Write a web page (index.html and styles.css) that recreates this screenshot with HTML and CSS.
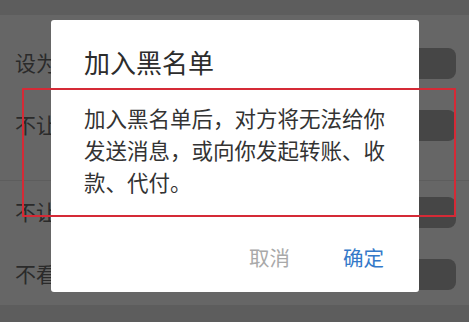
FILE: index.html
```html
<!DOCTYPE html>
<html lang="zh-CN">
<head>
    <meta charset="UTF-8">
    <meta name="viewport" content="width=device-width, initial-scale=1.0">
    <title>加入黑名单</title>
    <link rel="stylesheet" href="styles.css">
</head>
<body>
    <main class="settings">
        <section class="group group-first">
            <div class="row">
                <span class="label">设为</span>
                <span class="switch"></span>
            </div>
            <div class="row">
                <span class="label">不让</span>
                <span class="switch"></span>
            </div>
        </section>
        <section class="group group-second">
            <div class="row">
                <span class="label">不让</span>
                <span class="switch"></span>
            </div>
            <div class="row">
                <span class="label">不看</span>
                <span class="switch"></span>
            </div>
        </section>
    </main>

    <div class="dialog">
        <h2 class="dialog-title">加入黑名单</h2>
        <p class="dialog-text">加入黑名单后，对方将无法给你发送消息，或向你发起转账、收款、代付。</p>
        <div class="dialog-actions">
            <button class="btn btn-cancel">取消</button>
            <button class="btn btn-ok">确定</button>
        </div>
    </div>

    <div class="highlight"></div>
</body>
</html>
```

FILE: styles.css
```css
* {
    box-sizing: border-box;
    margin: 0;
    padding: 0;
}

body {
    width: 469px;
    height: 322px;
    overflow: hidden;
    position: relative;
    background-color: #5d5d5d;
    font-family: "Noto Sans CJK SC", "Noto Sans", sans-serif;
}

.settings {
    padding-top: 15px;
}

.group {
    background-color: #666;
}

.group-first {
    padding: 17px 0 24px;
}

.group-second {
    margin-top: 1px;
}

.row {
    height: 62px;
    display: flex;
    align-items: center;
    justify-content: space-between;
    padding: 0 13px 0 15px;
}

.label {
    font-size: 21px;
    line-height: 1.2;
    color: #2a2a2a;
}

.switch {
    width: 52px;
    height: 31px;
    border-radius: 8px;
    background-color: #464646;
}

.dialog {
    position: absolute;
    left: 51px;
    top: 20px;
    width: 368px;
    height: 272px;
    background-color: #fff;
    border-radius: 3px;
    padding: 29px 35px 0 33px;
}

.dialog-title {
    font-size: 26px;
    line-height: 26px;
    font-weight: normal;
    color: #2c2c2c;
}

.dialog-text {
    margin-top: 27px;
    width: 303px;
    font-size: 21.5px;
    line-height: 32px;
    color: #333;
}

.dialog-actions {
    margin-top: 44px;
    display: flex;
    justify-content: flex-end;
    gap: 53px;
}

.btn {
    background: none;
    border: none;
    font-family: inherit;
    font-size: 20.5px;
    line-height: 30px;
    cursor: pointer;
}

.btn-cancel {
    color: #a9a9a9;
}

.btn-ok {
    color: #3479c9;
}

.highlight {
    position: absolute;
    left: 22px;
    top: 88px;
    width: 434px;
    height: 129px;
    border: 2px solid #d52a36;
}
```
